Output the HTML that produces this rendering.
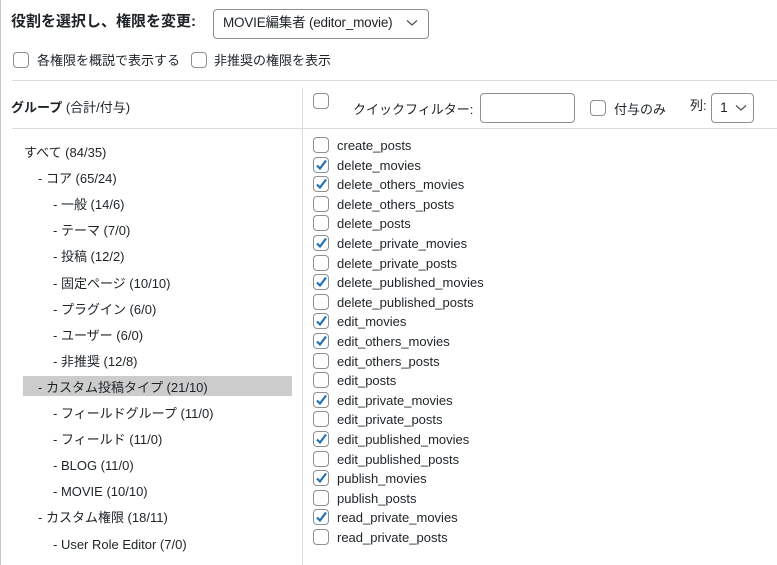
<!DOCTYPE html>
<html><head><meta charset="utf-8"><style>
body{margin:0;width:777px;height:565px;background:#fff;position:relative;overflow:hidden;font-family:"Liberation Sans","Noto Sans CJK JP",sans-serif;color:#1d2327;font-size:13px}
.a{position:absolute;white-space:nowrap;line-height:16px;height:16px}
.cb{position:absolute;width:14px;height:14px;border:1px solid #8c8f94;border-radius:4px;background:#fff}
.cb svg{position:absolute;left:0;top:0}
.sel{position:absolute;border:1px solid #8c8f94;border-radius:4px;background:#fff}
</style></head><body>
<div style="position:absolute;left:0;top:0;width:1px;height:565px;background:#c3c4c7"></div>
<div class="a" style="left:11px;top:14px;font-size:15px;font-weight:bold">役割を選択し、権限を変更:</div>
<div class="sel" style="left:213px;top:9px;width:214px;height:28px"></div>
<div class="a" style="left:223px;top:15px;font-size:13.5px;letter-spacing:-0.2px">MOVIE編集者 (editor_movie)</div>
<svg class="a" style="left:406px;top:19px" width="12" height="8"><path d="M1 1.5l5 4.5 5-4.5" stroke="#50575e" stroke-width="1.3" fill="none"/></svg>
<div class="cb" style="left:13px;top:52px"></div>
<div class="a" style="left:37px;top:53px">各権限を概説で表示する</div>
<div class="cb" style="left:191px;top:52px"></div>
<div class="a" style="left:214px;top:53px">非推奨の権限を表示</div>
<div style="position:absolute;left:12px;top:80px;width:765px;height:1px;background:#dcdcde"></div>
<div style="position:absolute;left:302px;top:88px;width:1px;height:477px;background:#dcdcde"></div>
<div class="a" style="left:11px;top:100px;font-weight:bold">グループ <span style="font-weight:normal">(合計/付与)</span></div>
<div style="position:absolute;left:12px;top:128px;width:765px;height:1px;background:#dcdcde"></div>
<div class="cb" style="left:313px;top:93px"></div>
<div class="a" style="left:353px;top:102px">クイックフィルター:</div>
<div class="sel" style="left:480px;top:93px;width:93px;height:28px"></div>
<div class="cb" style="left:590px;top:100px"></div>
<div class="a" style="left:614px;top:102px">付与のみ</div>
<div class="a" style="left:690px;top:98px">列:</div>
<div class="sel" style="left:711px;top:93px;width:41px;height:28px"></div>
<div class="a" style="left:720px;top:99px;font-size:14px">1</div>
<svg class="a" style="left:735px;top:104px" width="12" height="8"><path d="M1 1.5l5 4.5 5-4.5" stroke="#50575e" stroke-width="1.3" fill="none"/></svg>
<div style="position:absolute;left:23px;top:376px;width:269px;height:20px;background:#cccccc"></div>
<div id="L"></div>
<script>
var L=[["すべて (84/35)",24],["- コア (65/24)",38],["- 一般 (14/6)",53],["- テーマ (7/0)",53],["- 投稿 (12/2)",53],["- 固定ページ (10/10)",53],["- プラグイン (6/0)",53],["- ユーザー (6/0)",53],["- 非推奨 (12/8)",53],["- カスタム投稿タイプ (21/10)",38],["- フィールドグループ (11/0)",53],["- フィールド (11/0)",53],["- BLOG (11/0)",53],["- MOVIE (10/10)",53],["- カスタム権限 (18/11)",38],["- User Role Editor (7/0)",53]];
var h="";L.forEach(function(e,i){h+='<div class="a" style="left:'+e[1]+'px;top:'+(145+i*26.1)+'px">'+e[0]+'</div>'});
var R=[["create_posts",0],["delete_movies",1],["delete_others_movies",1],["delete_others_posts",0],["delete_posts",0],["delete_private_movies",1],["delete_private_posts",0],["delete_published_movies",1],["delete_published_posts",0],["edit_movies",1],["edit_others_movies",1],["edit_others_posts",0],["edit_posts",0],["edit_private_movies",1],["edit_private_posts",0],["edit_published_movies",1],["edit_published_posts",0],["publish_movies",1],["publish_posts",0],["read_private_movies",1],["read_private_posts",0]];
R.forEach(function(e,i){var y=Math.round(137+i*19.6);h+='<div class="cb" style="left:313px;top:'+y+'px">'+(e[1]?'<svg width="14" height="14"><path d="M3 7.5l3 3 6-8" stroke="#2271b1" stroke-width="2.2" fill="none"/></svg>':'')+'</div><div class="a" style="left:337px;top:'+(y+1)+'px">'+e[0]+'</div>'});
document.getElementById("L").innerHTML=h;
</script>
</body></html>
